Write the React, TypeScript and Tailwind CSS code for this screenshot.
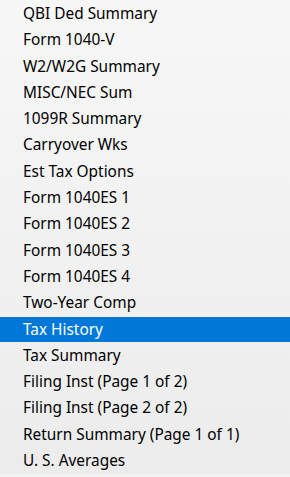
const ITEMS = [
  "QBI Ded Summary",
  "Form 1040-V",
  "W2/W2G Summary",
  "MISC/NEC Sum",
  "1099R Summary",
  "Carryover Wks",
  "Est Tax Options",
  "Form 1040ES 1",
  "Form 1040ES 2",
  "Form 1040ES 3",
  "Form 1040ES 4",
  "Two-Year Comp",
  "Tax History",
  "Tax Summary",
  "Filing Inst (Page 1 of 2)",
  "Filing Inst (Page 2 of 2)",
  "Return Summary (Page 1 of 1)",
  "U. S. Averages",
];

const SELECTED = "Tax History";

export default function App() {
  return (
    <div className="w-[290px] h-[477px] overflow-hidden bg-gradient-to-b from-[#f7f7f7] to-[#ececec] border-b-[3px] border-[#f3f3f3] font-['Noto_Sans',sans-serif] text-[15.4px] text-black">
      <ul className="mt-[0.4px]">
        {ITEMS.map((item) => (
          <li key={item} className="h-[26.3px] flex items-center">
            <div
              className={`w-full h-[25px] flex items-center pl-[23px] ${
                item === SELECTED ? "bg-[#0078d7] text-white" : ""
              }`}
            >
              {item}
            </div>
          </li>
        ))}
      </ul>
    </div>
  );
}
